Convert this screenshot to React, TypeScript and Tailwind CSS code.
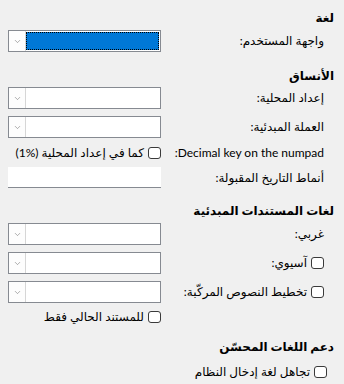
import { ChevronDown } from "lucide-react";

function Combo({ focused = false }: { focused?: boolean }) {
  return (
    <div className="flex h-[22px] w-[153px] flex-row-reverse border border-[#868a91] bg-white" dir="ltr">
      {focused ? (
        <div className="m-[1px] ml-0 flex-1 border border-dotted border-black bg-[#0078d7]" />
      ) : (
        <div className="flex-1" />
      )}
      <div className="flex w-[17px] items-center justify-center border-r border-[#d6d6d6] bg-[#fdfdfd]">
        <ChevronDown className="size-[9px] text-[#707070]" strokeWidth={1.5} />
      </div>
    </div>
  );
}

function Check() {
  return <span className="inline-block h-[12px] w-[13px] shrink-0 rounded-[3px] border border-[#3a3a3a] bg-white" />;
}

function Heading({ children, className = "" }: { children: React.ReactNode; className?: string }) {
  return <div className={`pr-[10px] text-[12px] leading-[16px] font-bold text-black ${className}`}>{children}</div>;
}

function Row({ label, children, check = false, className = "" }: { label: string; children: React.ReactNode; check?: boolean; className?: string }) {
  return (
    <div className={`flex items-center pl-[8px] ${className}`}>
      <div className="flex flex-1 items-center gap-[4px] pr-[20px] text-[12px] leading-[16px]">
        {check && <Check />}
        <span>{label}</span>
      </div>
      {children}
    </div>
  );
}

export default function App() {
  return (
    <div
      dir="rtl"
      className="h-[384px] w-[344px] overflow-hidden bg-[#f0f0f0] pt-[10px] text-black"
      style={{ fontFamily: 'Lato, "DejaVu Sans", sans-serif' }}
    >
      <Heading>لغة</Heading>
      <Row label="واجهة المستخدم:" className="mt-[4px]">
        <Combo focused />
      </Row>

      <Heading className="mt-[16px]">الأنساق</Heading>
      <Row label="إعداد المحلية:" className="mt-[3px]">
        <Combo />
      </Row>
      <Row label="العملة المبدئية:" className="mt-[7px]">
        <Combo />
      </Row>
      <div className="mt-[7px] flex items-center pl-[8px]">
        <div className="flex-1 pr-[20px] text-[12px] leading-[16px]" dir="ltr">
          <span className="block text-right">:Decimal key on the numpad</span>
        </div>
        <div className="flex w-[153px] items-center gap-[4px] text-[12px] leading-[16px]">
          <Check />
          <span className="whitespace-nowrap">
            كما في إعداد المحلية (<span dir="ltr">1%</span>)
          </span>
        </div>
      </div>
      <Row label="أنماط التاريخ المقبولة:" className="mt-[6px]">
        <div className="h-[21px] w-[153px] border-b border-[#868a91] bg-white" />
      </Row>

      <Heading className="mt-[15px]">لغات المستندات المبدئية</Heading>
      <Row label="غربي:" className="mt-[4px]">
        <Combo />
      </Row>
      <Row label="آسيوي:" check className="mt-[7px]">
        <Combo />
      </Row>
      <Row label="تخطيط النصوص المركّبة:" check className="mt-[7px]">
        <Combo />
      </Row>
      <div className="mt-[6px] flex items-center pl-[8px]">
        <div className="flex-1" />
        <div className="flex w-[153px] items-center gap-[4px] text-[12px] leading-[16px]">
          <Check />
          <span>للمستند الحالي فقط</span>
        </div>
      </div>

      <Heading className="mt-[14px]">دعم اللغات المحسّن</Heading>
      <div className="mt-[9px] flex items-center gap-[4px] pr-[17px] text-[12px] leading-[16px]">
        <Check />
        <span>تجاهل لغة إدخال النظام</span>
      </div>
    </div>
  );
}
